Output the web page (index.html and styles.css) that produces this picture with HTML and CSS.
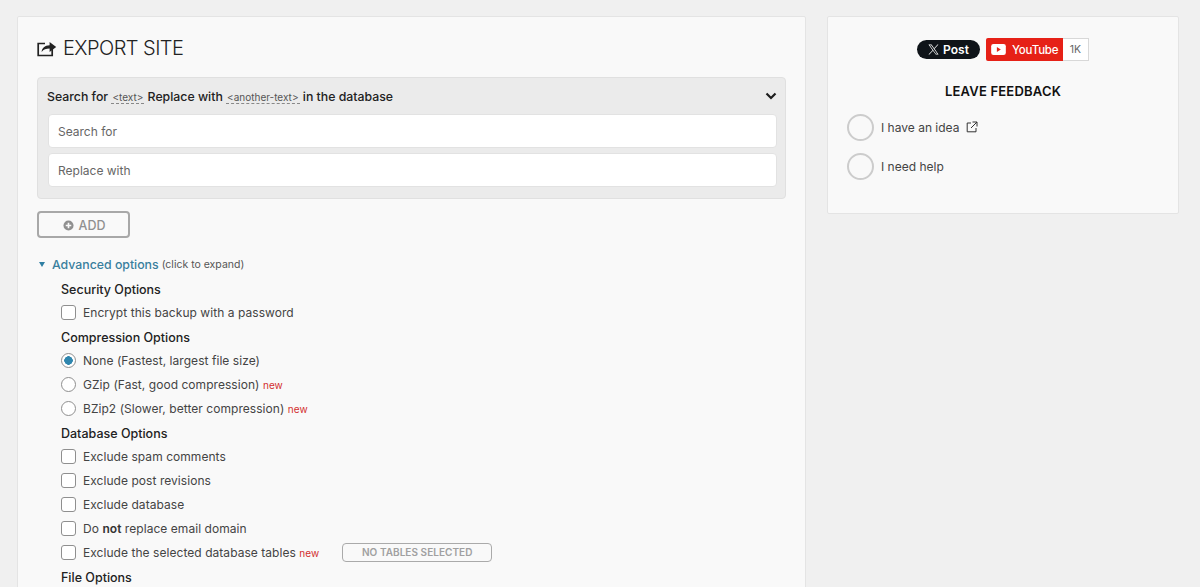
FILE: index.html
```html
<!DOCTYPE html>
<html lang="en">
<head>
<meta charset="utf-8">
<title>Export Site</title>
<link rel="stylesheet" href="styles.css">
</head>
<body>
<div class="page">
  <main class="card main-card">
    <h1 class="title">
      <svg class="title-icon" viewBox="0 0 20 18" width="20" height="18"><path d="M8 4.500H1.200v12h14V10" fill="none" stroke="#222" stroke-width="1.700"/><path d="M4.600 13c.4-4 3-6.600 8-6.800V3l6.600 5-6.600 5V9.600c-3.600 0-6 1-8 3.400z" fill="#222"/></svg>
      <span>EXPORT SITE</span>
    </h1>
    <section class="replace-box">
      <div class="replace-head">
        <div>Search for <span class="tag">&lt;text&gt;</span> Replace with <span class="tag">&lt;another-text&gt;</span> in the database</div>
        <svg class="chevron" viewBox="0 0 12 8" width="12" height="8"><path d="M1.500 1.500 6 6l4.500-4.500" fill="none" stroke="#1d1d1d" stroke-width="2.200"/></svg>
      </div>
      <input class="field" type="text" placeholder="Search for">
      <input class="field" type="text" placeholder="Replace with">
    </section>
    <button class="add-btn" type="button">
      <svg viewBox="0 0 12 12" width="11" height="11"><circle cx="6" cy="6" r="5.500" fill="#8f8f8f"/><path d="M6 3v6M3 6h6" stroke="#f9f9f9" stroke-width="1.800"/></svg>
      <span>ADD</span>
    </button>
    <div class="advanced">
      <span class="caret"></span><span class="adv-link">Advanced options</span> <span class="adv-hint">(click to expand)</span>
    </div>
    <div class="options">
      <h2 class="opt-title">Security Options</h2>
      <label class="opt"><span class="check"></span>Encrypt this backup with a password</label>
      <h2 class="opt-title">Compression Options</h2>
      <label class="opt"><span class="radio on"></span>None (Fastest, largest file size)</label>
      <label class="opt"><span class="radio"></span>GZip (Fast, good compression) <span class="new">new</span></label>
      <label class="opt"><span class="radio"></span>BZip2 (Slower, better compression) <span class="new">new</span></label>
      <h2 class="opt-title">Database Options</h2>
      <label class="opt"><span class="check"></span>Exclude spam comments</label>
      <label class="opt"><span class="check"></span>Exclude post revisions</label>
      <label class="opt"><span class="check"></span>Exclude database</label>
      <label class="opt"><span class="check"></span><span>Do <b>not</b> replace email domain</span></label>
      <label class="opt"><span class="check"></span>Exclude the selected database tables <span class="new">new</span><span class="tables-btn">NO TABLES SELECTED</span></label>
      <h2 class="opt-title">File Options</h2>
    </div>
  </main>
  <aside class="card side-card">
    <div class="socials">
      <span class="x-post">
        <svg viewBox="0 0 24 24" width="11" height="11"><path d="M14.300 10.200 22.800 1h-2l-7.400 8L7.700 1H1l8.900 12.600L1 23h2l7.800-8.400 6.200 8.400H23zM3.800 2.500h3.100l13.400 19h-3.100z" fill="#fff"/></svg>
        <span>Post</span>
      </span>
      <span class="yt">
        <span class="yt-red">
          <svg viewBox="0 0 16 12" width="15" height="11"><rect width="16" height="12" rx="2.500" fill="#fff"/><path d="M6.200 3.300v5.400L10.500 6z" fill="#e62117"/></svg>
          <span>YouTube</span>
        </span>
        <span class="yt-count">1K</span>
      </span>
    </div>
    <h2 class="feedback-title">LEAVE FEEDBACK</h2>
    <div class="feedback-row">
      <span class="big-radio"></span>
      <span>I have an idea</span>
      <svg class="ext" viewBox="0 0 12 12" width="12" height="12"><path d="M5 2H1.200v8.800H10V7M6.500 1h4.500v4.500M11 1 5 7" fill="none" stroke="#333" stroke-width="1"/></svg>
    </div>
    <div class="feedback-row">
      <span class="big-radio"></span>
      <span>I need help</span>
    </div>
  </aside>
</div>
</body>
</html>
```
FILE: styles.css
```css
* { box-sizing: border-box; }
html, body { margin: 0; height: 587px; overflow: hidden; }
body {
  background: #f0f0f0;
  font-family: Inter, "Liberation Sans", sans-serif;
  color: #444;
  font-size: 12px;
}
.page {
  display: flex;
  align-items: flex-start;
  gap: 21px;
  height: 587px;
  overflow: hidden;
  padding: 16px 21px 0 17px;
}
.card {
  background: #f9f9f9;
  border: 1px solid #e4e4e4;
  border-radius: 2px;
}
.main-card {
  width: 789px;
  height: 700px;
  flex: none;
  padding: 18px 19px 0 19px;
}
.title {
  display: flex;
  align-items: center;
  gap: 6px;
  margin: 0 0 16px;
  height: 26px;
  font-size: 20px;
  font-weight: 300;
  letter-spacing: -.55px;
  color: #222;
}
.replace-box {
  background: #ebebeb;
  border: 1px solid #e0e0e0;
  border-radius: 4px;
  padding: 0 8px 0 10px;
  height: 122px;
}
.replace-head {
  display: flex;
  justify-content: space-between;
  align-items: center;
  height: 36px;
  margin-left: -1px;
  font-size: 12.300px;
  font-weight: 500;
  color: #222;
}
.tag {
  font-size: 10px;
  font-weight: 400;
  color: #555;
  border-bottom: 1px dashed #888;
  padding: 0 1px;
}
.field {
  display: block;
  width: 100%;
  height: 34px;
  margin: 0 0 5px;
  padding: 0 9px;
  border: 1px solid #e2e2e2;
  border-radius: 4px;
  background: #fff;
  font: 12px Inter, "Liberation Sans", sans-serif;
  color: #555;
}
.field::placeholder { color: #666; opacity: 1; }
.add-btn {
  display: flex;
  align-items: center;
  justify-content: center;
  gap: 5px;
  width: 93px;
  height: 27px;
  margin-top: 12px;
  background: #f9f9f9;
  border: 2px solid #a8a8a8;
  border-radius: 4px;
  font: 500 12.500px Inter, "Liberation Sans", sans-serif;
  color: #909090;
  padding: 1px 0 0 1px;
}
.advanced {
  margin-top: 19px;
  margin-left: 2px;
  height: 16px;
  line-height: 16px;
  display: flex;
  align-items: center;
}
.caret {
  width: 0;
  height: 0;
  border-left: 3px solid transparent;
  border-right: 3px solid transparent;
  border-top: 5px solid #2f7fa3;
  margin-right: 7px;
  margin-top: -2px;
}
.adv-link { color: #3a7f9e; font-weight: 500; font-size: 12.300px; }
.adv-hint { font-size: 10.500px; color: #555; margin-left: 3px; }
.options { padding-left: 24px; margin-top: 5px; }
.opt-title {
  margin: 0;
  height: 24px;
  line-height: 24px;
  font-size: 12.500px;
  font-weight: 500;
  color: #222;
}
.opt {
  display: flex;
  align-items: center;
  height: 24px;
  padding-bottom: 4px;
  letter-spacing: .05px;
  white-space: pre;
}
.check, .radio {
  flex: none;
  width: 15px;
  height: 15px;
  border: 1px solid #8f8f8f;
  background: #fff;
  margin-right: 7px;
}
.check { border-radius: 3px; }
.radio { border-radius: 50%; }
.radio.on {
  background: radial-gradient(circle, #2f86ae 0 4px, #fff 4.500px);
}
.new { color: #d32f2f; font-size: 10px; margin-top: 1px; }
b { font-weight: 600; color: #333; }
.tables-btn {
  width: 150px;
  height: 19px;
  line-height: 17px;
  margin-left: 23px;
  text-align: center;
  border: 1px solid #aaa;
  border-radius: 4px;
  font-size: 10px;
  font-weight: 600;
  color: #a0a0a0;
}
.side-card {
  width: 352px;
  height: 198px;
  flex: none;
  padding: 21px 19px 0;
}
.socials {
  display: flex;
  justify-content: center;
  align-items: center;
  gap: 6px;
}
.x-post {
  display: flex;
  align-items: center;
  justify-content: center;
  gap: 4px;
  width: 63px;
  height: 19px;
  border-radius: 10px;
  background: #0f1419;
  color: #fff;
  font-size: 12px;
  font-weight: 600;
}
.yt { display: flex; height: 23px; }
.yt-red {
  display: flex;
  align-items: center;
  gap: 6px;
  width: 77px;
  padding-left: 5px;
  background: #e62117;
  color: #fff;
  font-size: 11.500px;
  font-weight: 500;
  letter-spacing: -.2px;
  border-radius: 2px 0 0 2px;
}
.yt-count {
  width: 26px;
  display: flex;
  align-items: center;
  justify-content: center;
  background: #fff;
  border: 1px solid #d8d8d8;
  border-left: 0;
  font-size: 10.500px;
  color: #666;
}
.feedback-title {
  margin: 21px 0 13px;
  text-align: center;
  font-size: 13px;
  font-weight: 600;
  letter-spacing: .2px;
  line-height: 18px;
  color: #111;
}
.feedback-row {
  display: flex;
  align-items: center;
  height: 28px;
  margin-bottom: 11px;
  gap: 7px;
  color: #444;
}
.big-radio {
  width: 27px;
  height: 27px;
  border-radius: 50%;
  border: 2px solid #ccc;
  background: #f9f9f9;
}
```
